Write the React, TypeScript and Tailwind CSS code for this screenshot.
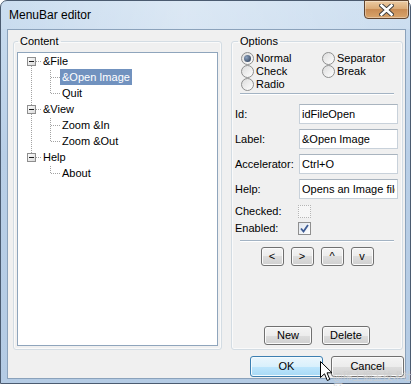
import React from "react";

const btn =
  "flex items-center justify-center rounded-[3px] border border-[#707070] bg-[linear-gradient(#f4f4f4_0%,#ececec_50%,#dddddd_50%,#d0d0d0_100%)] shadow-[inset_0_0_0_1px_#fbfbfb] text-[11px] leading-none text-black";

const input =
  "h-[20px] w-[99px] border border-[#c8d1da] border-t-[#a9b4bf] bg-white px-[2px] text-[11px] text-black outline-none";

type Node = { label: string; selected?: boolean; children?: Node[] };

const tree: Node[] = [
  { label: "&File", children: [{ label: "&Open Image", selected: true }, { label: "Quit" }] },
  { label: "&View", children: [{ label: "Zoom &In" }, { label: "Zoom &Out" }] },
  { label: "Help", children: [{ label: "About" }] },
];

function TreeLines() {
  // connector lines + expander boxes, coordinates inside the tree box
  const dot = { stroke: "#a3a3a3", strokeDasharray: "1 1" };
  const box = (cy: number) => (
    <g key={cy}>
      <rect x={9.5} y={cy - 3.5} width={8} height={8} fill="url(#exp)" stroke="#8e8e8e" />
      <line x1={11} y1={cy + 0.5} x2={16} y2={cy + 0.5} stroke="#1b1b1b" />
    </g>
  );
  return (
    <svg className="pointer-events-none absolute left-0 top-0" width="199" height="140">
      <defs>
        <linearGradient id="exp" x1="0" y1="0" x2="1" y2="1">
          <stop offset="0" stopColor="#ffffff" />
          <stop offset="1" stopColor="#d8d8d8" />
        </linearGradient>
      </defs>
      <line x1={13.5} y1={13} x2={13.5} y2={52} {...dot} />
      <line x1={13.5} y1={61} x2={13.5} y2={100} {...dot} />
      {[8, 56, 104].map((cy) => (
        <line key={`h${cy}`} x1={18} y1={cy + 0.5} x2={24} y2={cy + 0.5} {...dot} />
      ))}
      <line x1={32.5} y1={17} x2={32.5} y2={41} {...dot} />
      <line x1={32.5} y1={65} x2={32.5} y2={89} {...dot} />
      <line x1={32.5} y1={113} x2={32.5} y2={121} {...dot} />
      {[24, 40, 72, 88, 120].map((cy) => (
        <line key={`c${cy}`} x1={33} y1={cy + 0.5} x2={42} y2={cy + 0.5} {...dot} />
      ))}
      {[8, 56, 104].map(box)}
    </svg>
  );
}

function Radio({ label, checked }: { label: string; checked?: boolean }) {
  return (
    <div className="flex h-[13px] items-center gap-[2px]">
      <span className="flex size-[13px] items-center justify-center rounded-full border border-[#8e8f8f] bg-[linear-gradient(135deg,#dcdcdc,#ffffff)]">
        {checked ? (
          <span className="size-[7px] rounded-full bg-[radial-gradient(circle_at_35%_35%,#8da3c0,#23344d)]" />
        ) : null}
      </span>
      <span className="leading-[13px]">{label}</span>
    </div>
  );
}

function Field({ label, value }: { label: string; value: string }) {
  return (
    <div className="flex h-[20px] items-center">
      <span className="w-[64px]">{label}</span>
      <input className={input} value={value} readOnly />
    </div>
  );
}

function Check({ label, checked }: { label: string; checked?: boolean }) {
  return (
    <div className="flex h-[17px] items-center">
      <span className="w-[63px]">{label}</span>
      <span
        className={
          checked
            ? "flex size-[13px] items-center justify-center border border-[#8f8f8f] bg-[linear-gradient(135deg,#e0e6ee,#ffffff)]"
            : "size-[13px] border border-dotted border-[#b5b5b5] bg-[#f6f6f6]"
        }
      >
        {checked ? (
          <svg width="9" height="9" viewBox="0 0 9 9">
            <path d="M1 4.5 L3.5 7.5 L8 1" fill="none" stroke="#3d5b94" strokeWidth="1.8" />
          </svg>
        ) : null}
      </span>
    </div>
  );
}

export default function App() {
  return (
    <div className="relative h-[386px] w-[416px] bg-white font-['Liberation_Sans',Arial,sans-serif] text-[11px] text-black">
      <div className="flex h-[384px] w-[411px] flex-col rounded-t-[7px] border border-[#4b5b70] bg-[linear-gradient(180deg,#c9dcef,#b9cfe7_40%,#b4cbe4)]">
        {/* title bar */}
        <div className="flex h-[28px] justify-between bg-[linear-gradient(90deg,rgba(255,255,255,0.05),rgba(255,255,255,0.35)_45%,rgba(255,255,255,0.1))]">
          <span className="pl-[8px] pt-[7px] text-[12px] leading-[14px] text-black">MenuBar editor</span>
          <span className="mr-[1px] -mt-px flex h-[19px] w-[45px] items-center justify-center rounded-b-[4px] border border-[#5e4330] bg-[linear-gradient(#eccba3,#d9a772_50%,#c98c55_50%,#d8a46c)] shadow-[inset_0_0_0_1px_rgba(255,255,255,0.35)]">
            <svg width="15" height="12" viewBox="0 0 15 12">
              <path d="M2.5 1.5 L12.5 10.5 M12.5 1.5 L2.5 10.5" stroke="#3a3a3a" strokeWidth="4.4" strokeLinecap="square" />
              <path d="M2.5 1.5 L12.5 10.5 M12.5 1.5 L2.5 10.5" stroke="#ffffff" strokeWidth="2.6" strokeLinecap="square" />
            </svg>
          </span>
        </div>

        {/* client area */}
        <div className="ml-[6px] mr-[4px] flex h-[350px] w-[399px] flex-col border border-[#8ba2bb] bg-[#f0f0f0]">
          <div className="flex h-[320px] gap-[9px] pl-[5px] pt-[4px]">
            <fieldset className="flex h-[316px] w-[209px] min-w-0 flex-col rounded-[3px] border border-[#d3dce3] shadow-[inset_0_0_0_1px_#fafafa]">
              <legend className="ml-[4px] px-[2px] leading-[14px]">Content</legend>
              <div className="relative mx-[3px] mb-[3px] mt-[4px] flex-1 border border-[#8fa5bc] bg-white">
                <TreeLines />
                {tree.map((node) => (
                  <div key={node.label}>
                    <div className="flex h-[16px] items-center pl-[23px]">
                      <span className="px-[2px] leading-[16px]">{node.label}</span>
                    </div>
                    {node.children?.map((c) => (
                      <div key={c.label} className="flex h-[16px] items-center pl-[42px]">
                        <span
                          className={
                            c.selected
                              ? "h-[16px] bg-[#7192bf] px-[2px] leading-[16px] text-white"
                              : "px-[2px] leading-[16px]"
                          }
                        >
                          {c.label}
                        </span>
                      </div>
                    ))}
                  </div>
                ))}
              </div>
            </fieldset>

            <fieldset className="flex h-[316px] w-[172px] min-w-0 flex-col rounded-[3px] border border-[#d3dce3] shadow-[inset_0_0_0_1px_#fafafa]">
              <legend className="ml-[6px] px-[2px] leading-[14px]">Options</legend>
              <div className="mt-[4px] grid grid-cols-[81px_auto] pl-[9px]">
                <Radio label="Normal" checked />
                <Radio label="Separator" />
                <Radio label="Check" />
                <Radio label="Break" />
                <Radio label="Radio" />
              </div>
              <div className="mx-[8px] mt-[2px] h-[2px] border-t border-b border-t-[#a3b3c3] border-b-white" />

              <div className="mt-[9px] flex flex-col gap-[5px] pl-[3px]">
                <Field label="Id:" value="idFileOpen" />
                <Field label="Label:" value="&Open Image" />
                <Field label="Accelerator:" value="Ctrl+O" />
                <Field label="Help:" value="Opens an Image file" />
              </div>
              <div className="mt-[4px] flex flex-col pl-[3px]">
                <Check label="Checked:" />
                <Check label="Enabled:" checked />
              </div>
              <div className="mx-[8px] mt-[3px] h-[2px] border-t border-b border-t-[#a3b3c3] border-b-white" />

              <div className="mt-[5px] flex justify-center gap-[7px]">
                {["<", ">", "^", "v"].map((k) => (
                  <button key={k} type="button" className={`${btn} h-[19px] w-[23px]`}>
                    {k}
                  </button>
                ))}
              </div>

              <div className="mb-[4px] mt-auto flex justify-center gap-[10px]">
                <button type="button" className={`${btn} h-[19px] w-[48px]`}>
                  New
                </button>
                <button type="button" className={`${btn} h-[19px] w-[48px]`}>
                  Delete
                </button>
              </div>
            </fieldset>
          </div>

          <div className="mt-[6px] flex justify-end gap-[8px] pr-[1px]">
            <button
              type="button"
              className="flex h-[21px] w-[73px] items-center justify-center rounded-[3px] border border-[#3c7fb1] bg-[linear-gradient(#eaf6fd_0%,#d9f0fc_50%,#bee6fd_50%,#a7d9f5_100%)] shadow-[inset_0_0_0_1px_#f4fbfe] text-[11px] leading-none"
            >
              OK
            </button>
            <button type="button" className={`${btn} h-[21px] w-[73px]`}>
              Cancel
            </button>
          </div>
        </div>
      </div>

      {/* mouse pointer */}
      <svg className="absolute left-[320px] top-[361px]" width="13" height="21" viewBox="0 0 13 21">
        <path
          d="M0.5 0.5 L0.5 16.5 L4.5 12.8 L7.3 19.5 L9.8 18.4 L7 11.8 L12 11.8 Z"
          fill="#ffffff"
          stroke="#000000"
          strokeLinejoin="round"
        />
      </svg>

      {/* watermark */}
      <span className="absolute left-[333px] top-[370px] font-['Noto_Sans_CJK_SC',sans-serif] text-[10px] leading-[12px] text-[#cfcfcf] opacity-80">
        @稀土掘金技术社区
      </span>
    </div>
  );
}
